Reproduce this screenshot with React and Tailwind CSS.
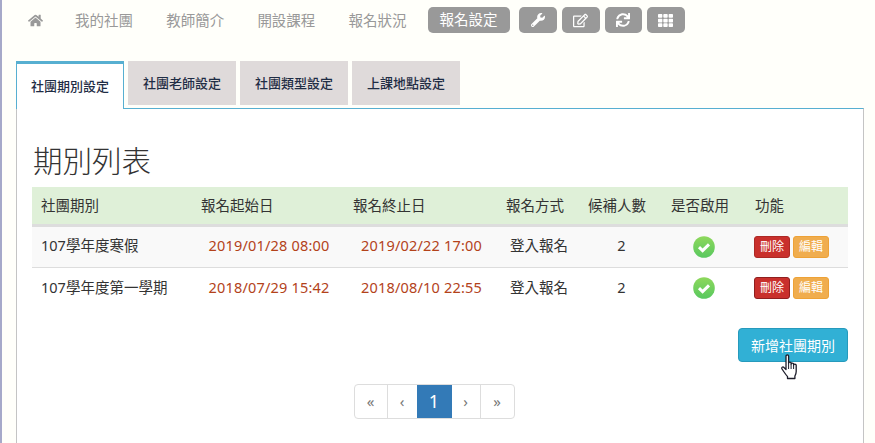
import { FaHome, FaWrench, FaRegEdit, FaSync, FaTh } from "react-icons/fa";

const font = { fontFamily: '"Noto Sans", "Noto Sans CJK TC", sans-serif' };

const navLinks = ["我的社團", "教師簡介", "開設課程", "報名狀況"];
const tabs = ["社團老師設定", "社團類型設定", "上課地點設定"];
const rows = [
  { name: "107學年度寒假", start: "2019/01/28 08:00", end: "2019/02/22 17:00" },
  { name: "107學年度第一學期", start: "2018/07/29 15:42", end: "2018/08/10 22:55" },
];

function CheckIcon() {
  return (
    <svg width="22" height="22" viewBox="0 0 22 22" className="mx-auto block -translate-x-[1px]">
      <defs>
        <linearGradient id="okGreen" x1="0" y1="0" x2="0" y2="1">
          <stop offset="0" stopColor="#8ed85c" />
          <stop offset="1" stopColor="#58c85f" />
        </linearGradient>
      </defs>
      <circle cx="11" cy="11" r="10.8" fill="url(#okGreen)" />
      <path d="M6 11.2l3.6 3.4L16 8.4" fill="none" stroke="#fff" strokeWidth="3" />
    </svg>
  );
}

function HandCursor() {
  return (
    <svg width="19" height="26" viewBox="0 0 19 26" className="absolute left-[41px] top-[25px]">
      <path
        d="M6 2c0-1.500 2.600-1.500 2.600 0v7c0-1.200 2.500-1.200 2.500 0v1c0-1.200 2.500-1.200 2.500 0v1c0-1.200 2.600-1.200 2.600 0.200v6.300c0 2-0.600 3-1.300 4.500v2.500H7.500v-2c-1.500-1.500-3.500-4.500-5.500-7.500-1-1.500 0.800-2.800 2-1.500l2 2z"
        fill="#fff"
        stroke="#1c1c2a"
        strokeWidth="1.300"
        strokeLinejoin="round"
      />
      <path d="M8.600 9v6M11.100 10v5M13.600 11v4" stroke="#1c1c2a" strokeWidth="1" fill="none" />
    </svg>
  );
}

export default function App() {
  return (
    <div style={font} className="h-[443px] overflow-hidden bg-[#fffffa] border-l-2 border-[#a6a9c9] text-[14.500px] text-[#333]">
      <nav className="flex items-center h-[40px] pl-[26px] text-[14.500px] text-[#999]">
        <FaHome className="text-[15px] mr-[32px]" />
        <div className="flex gap-[33.200px] pt-[1px]">
          {navLinks.map((link) => (
            <a key={link}>{link}</a>
          ))}
        </div>
        <button className="ml-[21px] h-[26px] w-[82px] rounded-[5px] bg-[#999] text-white">報名設定</button>
        <div className="flex ml-[9px] gap-[5px] text-white">
          <button className="flex h-[26px] w-[38px] items-center justify-center rounded-[5px] bg-[#999]"><FaWrench className="text-[14px]" /></button>
          <button className="flex h-[26px] w-[38px] items-center justify-center rounded-[5px] bg-[#999]"><FaRegEdit className="text-[15px]" /></button>
          <button className="flex h-[26px] w-[37px] items-center justify-center rounded-[5px] bg-[#999]"><FaSync className="text-[14px]" /></button>
          <button className="flex h-[26px] w-[38px] items-center justify-center rounded-[5px] bg-[#999]"><FaTh className="text-[15px]" /></button>
        </div>
      </nav>

      <div className="ml-[14px] mr-[11px] mt-[21px]">
        <div className="flex items-start gap-[4px]">
          <div className="relative z-10 -mb-[1px] flex h-[48px] w-[108px] items-center justify-center border-x border-t-[3px] border-[#57afd1] border-b-0 bg-white text-[13px] font-medium text-[#1f2d45]">
            社團期別設定
          </div>
          {tabs.map((tab) => (
            <div key={tab} className="flex h-[44px] w-[108px] items-center justify-center bg-[#dfdada] pt-[2px] text-[13px] font-medium text-[#1f2d45]">
              {tab}
            </div>
          ))}
        </div>

        <div className="h-[400px] border-x border-t border-x-[#c4c4c4] border-t-[#57afd1] bg-white px-[15px]">
          <h2 className="mt-[30px] pl-[1px] text-[29.500px] font-light leading-[44px] text-[#333]">期別列表</h2>
          <table className="mt-[4px] w-[816px] table-fixed border-collapse">
            <thead>
              <tr className="h-[38px] bg-[#dff0d8] border-b-[3px] border-[#ddd] text-left">
                <th className="w-[161px] pl-[9px] pt-[2px] font-normal">社團期別</th>
                <th className="w-[152px] pl-[8px] pt-[2px] font-normal">報名起始日</th>
                <th className="w-[153px] pl-[8px] pt-[2px] font-normal">報名終止日</th>
                <th className="w-[82px] pl-[8px] pt-[2px] font-normal">報名方式</th>
                <th className="w-[83px] pl-[8px] pt-[2px] font-normal">候補人數</th>
                <th className="w-[84px] pl-[8px] pt-[2px] font-normal">是否啟用</th>
                <th className="pl-[8px] pt-[2px] font-normal">功能</th>
              </tr>
            </thead>
            <tbody>
              {rows.map((row, i) => (
                <tr key={row.name} className={`h-[42px] ${i === 0 ? "bg-[#f9f9f9] border-b border-[#ddd]" : "bg-white"}`}>
                  <td className="pl-[9px] pb-[1px]">{row.name}</td>
                  <td className="pb-[1px] text-center tracking-[0.2px] text-[#b3421a]">{row.start}</td>
                  <td className="pb-[1px] text-center tracking-[0.2px] text-[#b3421a]">{row.end}</td>
                  <td className="pb-[1px] text-center">登入報名</td>
                  <td className="pb-[1px] text-center">2</td>
                  <td><CheckIcon /></td>
                  <td className="pl-[7px]">
                    <div className="flex gap-[3px] text-[12px] text-white">
                      <button className={`h-[22px] w-[36px] rounded-[3px] border bg-[#c9302c] ${i === 0 ? "border-[#ac2925]" : "border-[#8f1f1f]"}`}>刪除</button>
                      <button className="h-[22px] w-[36px] rounded-[3px] border border-[#eea236] bg-[#f0ad4e]">編輯</button>
                    </div>
                  </td>
                </tr>
              ))}
            </tbody>
          </table>

          <div className="flex justify-end w-[816px] mt-[19px]">
            <button className="relative h-[34px] w-[110px] rounded-[4px] border border-[#269abc] bg-[#31b0d5] text-[14px] text-white">
              新增社團期別
              <HandCursor />
            </button>
          </div>

          <div className="mt-[22px] flex w-[816px] justify-center pr-[12px]">
            <ul className="flex h-[35px] items-stretch rounded-[4px] border border-[#ddd] text-[15px] text-[#777]">
              <li className="flex w-[33px] items-center justify-center border-r border-[#ddd]">«</li>
              <li className="flex w-[29px] items-center justify-center">‹</li>
              <li className="flex w-[35px] items-center justify-center bg-[#337ab7] text-[18px] text-white">1</li>
              <li className="flex w-[29px] items-center justify-center border-r border-[#ddd]">›</li>
              <li className="flex w-[33px] items-center justify-center">»</li>
            </ul>
          </div>
        </div>
      </div>
    </div>
  );
}
